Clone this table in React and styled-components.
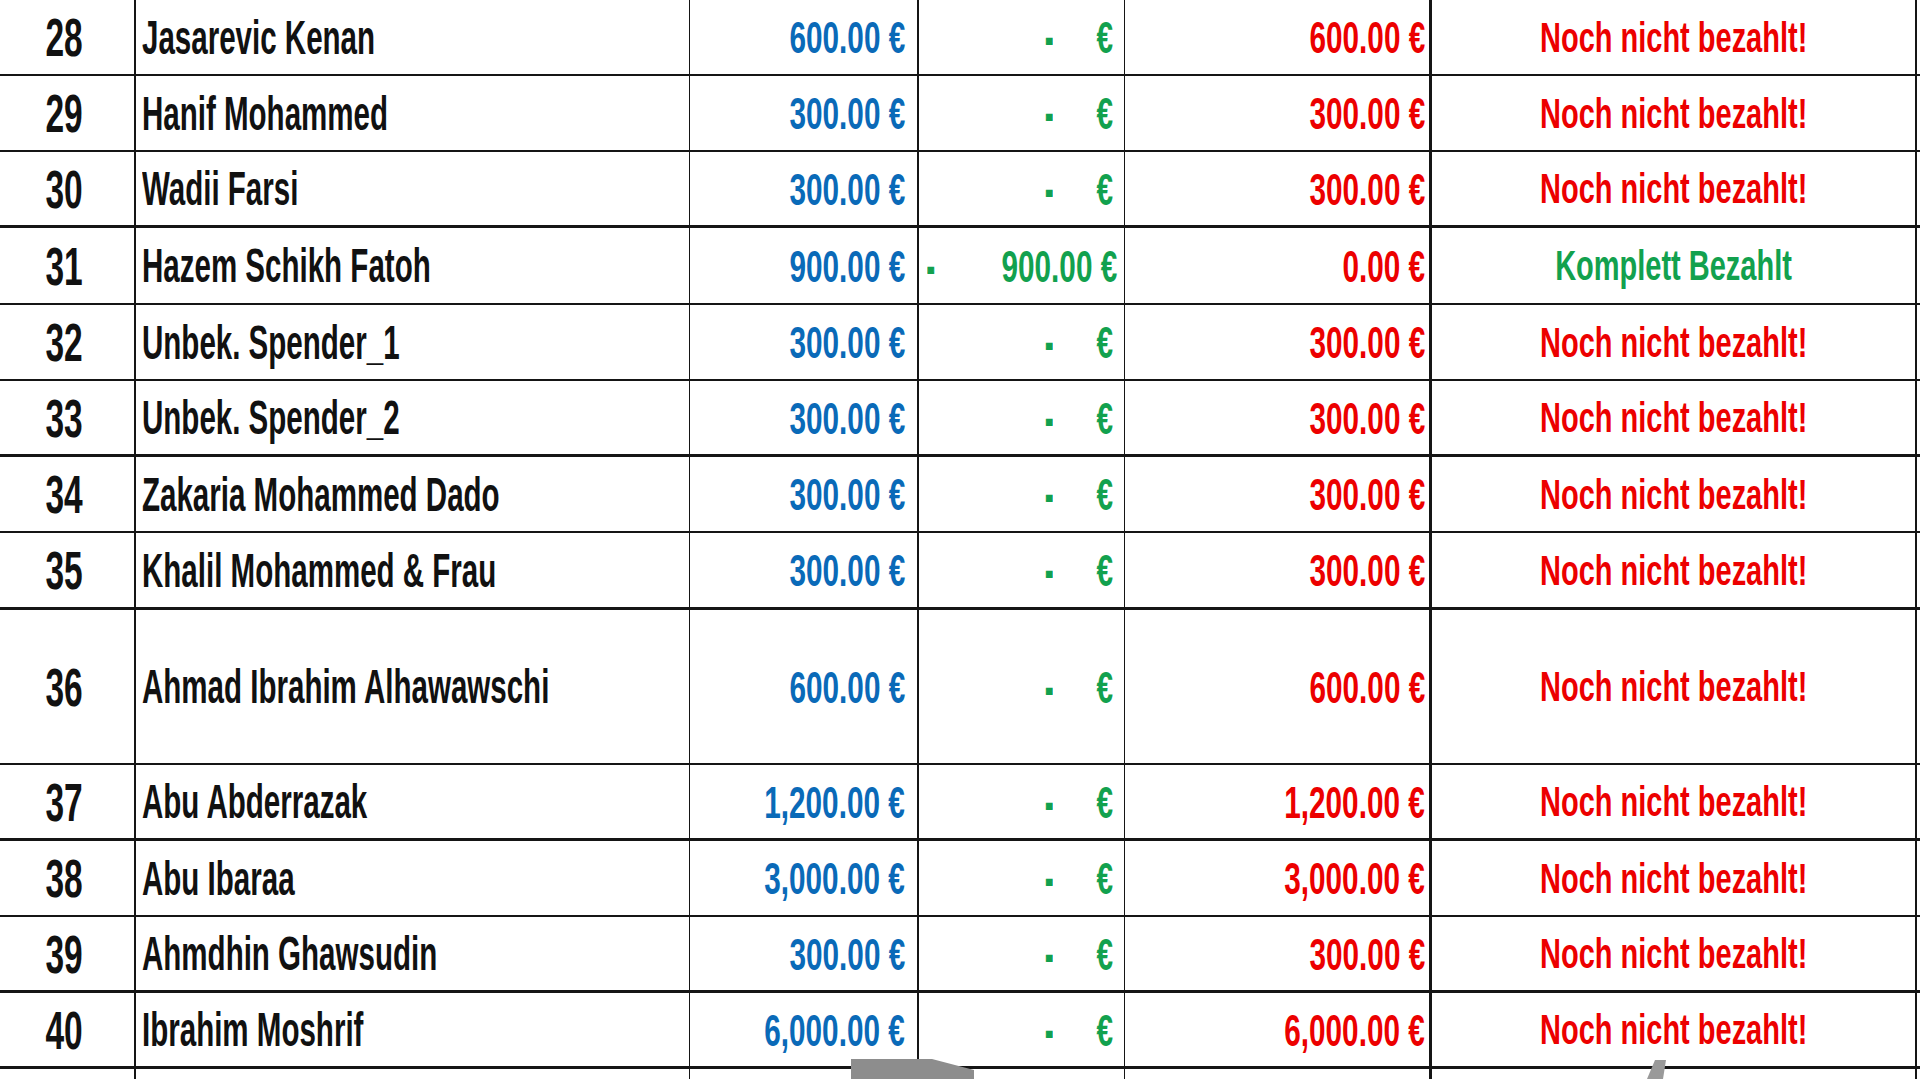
import styled, { createGlobalStyle } from 'styled-components';

const GlobalStyle = createGlobalStyle`
  html, body {
    margin: 0;
    padding: 0;
    background: #ffffff;
    overflow: hidden;
  }
  body {
    font-family: "Liberation Sans", Arial, sans-serif;
  }
`;

const BLUE = '#0a6ab8';
const GREEN = '#12a14e';
const RED = '#ec0000';
const LINE = '#151515';

const rows = [
  { n: 28, name: 'Jasarevic Kenan', total: '600.00', open: '600.00', h: 76 },
  { n: 29, name: 'Hanif Mohammed', total: '300.00', open: '300.00', h: 76 },
  { n: 30, name: 'Wadii Farsi', total: '300.00', open: '300.00', h: 76, thick: true },
  { n: 31, name: 'Hazem Schikh Fatoh', total: '900.00', paid: '900.00', open: '0.00', h: 77, done: true },
  { n: 32, name: 'Unbek. Spender_1', total: '300.00', open: '300.00', h: 76 },
  { n: 33, name: 'Unbek. Spender_2', total: '300.00', open: '300.00', h: 76, thick: true },
  { n: 34, name: 'Zakaria Mohammed Dado', total: '300.00', open: '300.00', h: 76 },
  { n: 35, name: 'Khalil Mohammed & Frau', total: '300.00', open: '300.00', h: 77, thick: true },
  { n: 36, name: 'Ahmad Ibrahim Alhawawschi', total: '600.00', open: '600.00', h: 155 },
  { n: 37, name: 'Abu Abderrazak', total: '1,200.00', open: '1,200.00', h: 76, thick: true },
  { n: 38, name: 'Abu Ibaraa', total: '3,000.00', open: '3,000.00', h: 76 },
  { n: 39, name: 'Ahmdhin Ghawsudin', total: '300.00', open: '300.00', h: 76, thick: true },
  { n: 40, name: 'Ibrahim Moshrif', total: '6,000.00', open: '6,000.00', h: 76, thick: true },
];

const Page = styled.div`
  position: relative;
  width: 1920px;
  height: 1079px;
  overflow: hidden;
  background: #ffffff;
`;

const Sheet = styled.div`
  display: flex;
  flex-direction: column;
`;

const Row = styled.div`
  display: grid;
  grid-template-columns: 136px 554px 229px 206px 307px 485px 3px;
  height: ${(p) => p.$h}px;
  box-sizing: border-box;
  border-bottom: ${(p) => (p.$thick ? 3 : 2)}px solid ${LINE};
  flex-shrink: 0;
`;

const Cell = styled.div`
  display: flex;
  align-items: center;
  justify-content: ${(p) => p.$justify || 'flex-start'};
  box-sizing: border-box;
  border-right: ${(p) => p.$line ?? 0}px solid ${LINE};
  padding: 2px ${(p) => p.$pr || 0}px 0 ${(p) => p.$pl || 0}px;
  overflow: hidden;
  min-width: 0;
`;

const Txt = styled.span`
  display: inline-block;
  white-space: pre;
  font-family: "Liberation Sans", Arial, sans-serif;
  font-weight: 700;
  font-size: ${(p) => p.$size}px;
  line-height: 1.1;
  color: ${(p) => p.$color || '#111'};
  transform: scaleX(${(p) => p.$sx});
  transform-origin: ${(p) => p.$origin || 'left'} center;
`;

const Dash = styled.span`
  display: inline-block;
  font-family: "Liberation Sans", Arial, sans-serif;
  font-weight: 700;
  font-size: 45px;
  line-height: 1.1;
  color: ${GREEN};
  -webkit-text-stroke: 2px ${GREEN};
  transform: scaleX(0.5);
  transform-origin: ${(p) => p.$origin || 'center'} center;
  margin-right: ${(p) => p.$mr || 0}px;
`;

const Overlay = styled.svg`
  position: absolute;
  left: 0;
  top: 0;
  pointer-events: none;
`;

const Money = ({ value, color, origin = 'right' }) => (
  <Txt $size={45} $sx={0.66} $color={color} $origin={origin}>
    {value} €
  </Txt>
);

const PaidCell = ({ paid }) =>
  paid ? (
    <Cell $line={1} $justify="space-between" $pl={8} $pr={17}>
      <Dash $origin="left">-</Dash>
      <Money value={paid} color={GREEN} />
    </Cell>
  ) : (
    <Cell $line={1} $justify="flex-end" $pr={11}>
      <Dash $origin="right" $mr={35}>-</Dash>
      <Txt $size={45} $sx={0.66} $color={GREEN} $origin="right">
        €
      </Txt>
    </Cell>
  );

const EntryRow = ({ row }) => (
  <Row $h={row.h} $thick={row.thick}>
    <Cell $line={2} $justify="center" $pr={6}>
      <Txt $size={54} $sx={0.62} $origin="center">
        {row.n}
      </Txt>
    </Cell>
    <Cell $line={1} $pl={6}>
      <Txt $size={48} $sx={0.615} $origin="left">
        {row.name}
      </Txt>
    </Cell>
    <Cell $line={2} $justify="flex-end" $pr={12}>
      <Money value={row.total} color={BLUE} />
    </Cell>
    <PaidCell paid={row.paid} />
    <Cell $line={3} $justify="flex-end" $pr={4}>
      <Money value={row.open} color={RED} />
    </Cell>
    <Cell $line={2} $justify="center">
      <Txt $size={42} $sx={0.69} $color={row.done ? GREEN : RED} $origin="center">
        {row.done ? 'Komplett Bezahlt' : 'Noch nicht bezahlt!'}
      </Txt>
    </Cell>
    <Cell />
  </Row>
);

const TailRow = () => (
  <Row $h={24}>
    <Cell $line={2} />
    <Cell $line={1} />
    <Cell $line={2} />
    <Cell $line={1} />
    <Cell $line={3} />
    <Cell $line={2} />
    <Cell />
  </Row>
);

export default function App() {
  return (
    <Page>
      <GlobalStyle />
      <Sheet>
        {rows.map((row) => (
          <EntryRow key={row.n} row={row} />
        ))}
        <TailRow />
      </Sheet>
      <Overlay width="1920" height="1079" viewBox="0 0 1920 1079">
        <polygon points="851,1059 932,1059 974,1070 974,1079 851,1079" fill="#8d8d8d" />
        <polygon points="1655,1060 1666,1060 1663,1079 1647,1079" fill="#9a9a9a" />
      </Overlay>
    </Page>
  );
}
